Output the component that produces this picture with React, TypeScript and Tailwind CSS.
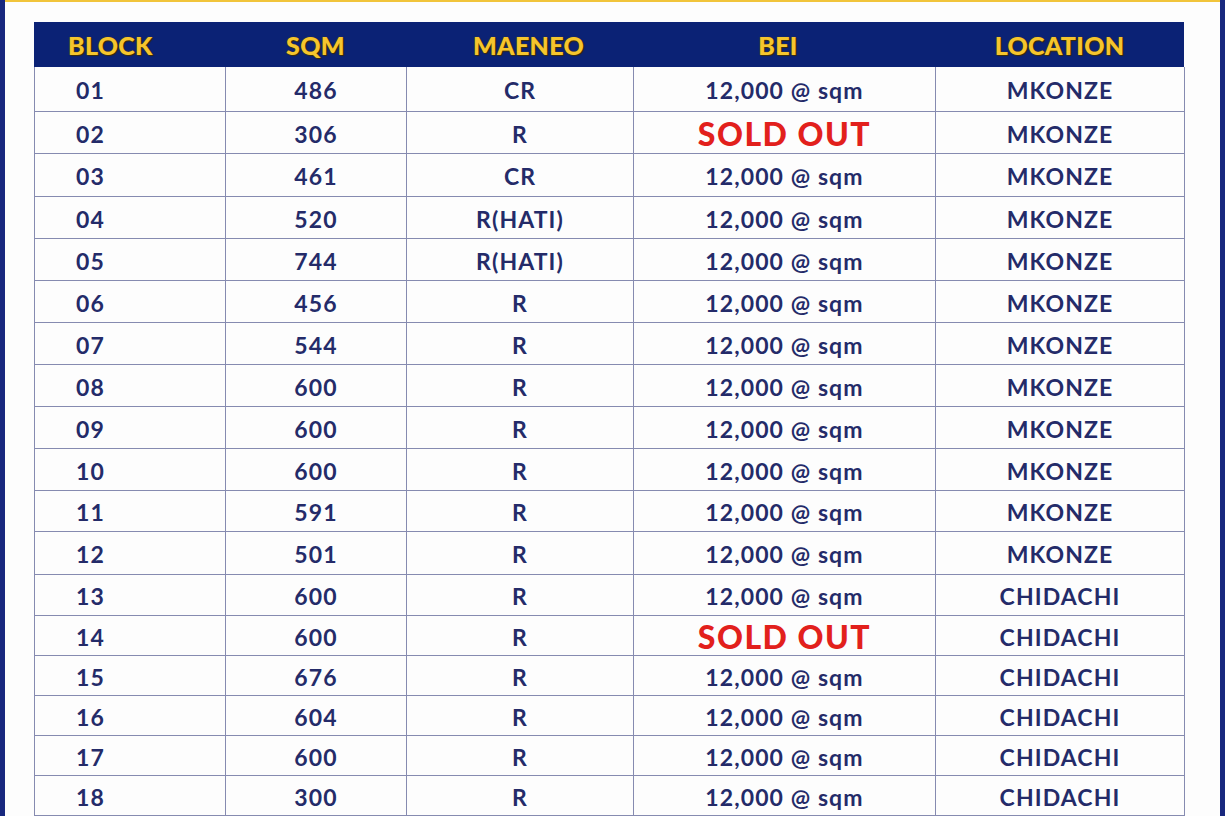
import React from 'react';

type Row = { block: string; sqm: string; eneo: string; sold?: boolean; loc: string; h: string };

const rows: Row[] = [
    { block: '01', sqm: '486', eneo: 'CR', loc: 'MKONZE', h: 'h-[45px]' },
    { block: '02', sqm: '306', eneo: 'R', sold: true, loc: 'MKONZE', h: 'h-[42px]' },
    { block: '03', sqm: '461', eneo: 'CR', loc: 'MKONZE', h: 'h-[43px]' },
    { block: '04', sqm: '520', eneo: 'R(HATI)', loc: 'MKONZE', h: 'h-[42px]' },
    { block: '05', sqm: '744', eneo: 'R(HATI)', loc: 'MKONZE', h: 'h-[42px]' },
    { block: '06', sqm: '456', eneo: 'R', loc: 'MKONZE', h: 'h-[42px]' },
    { block: '07', sqm: '544', eneo: 'R', loc: 'MKONZE', h: 'h-[42px]' },
    { block: '08', sqm: '600', eneo: 'R', loc: 'MKONZE', h: 'h-[42px]' },
    { block: '09', sqm: '600', eneo: 'R', loc: 'MKONZE', h: 'h-[42px]' },
    { block: '10', sqm: '600', eneo: 'R', loc: 'MKONZE', h: 'h-[42px]' },
    { block: '11', sqm: '591', eneo: 'R', loc: 'MKONZE', h: 'h-[41px]' },
    { block: '12', sqm: '501', eneo: 'R', loc: 'MKONZE', h: 'h-[43px]' },
    { block: '13', sqm: '600', eneo: 'R', loc: 'CHIDACHI', h: 'h-[41px]' },
    { block: '14', sqm: '600', eneo: 'R', sold: true, loc: 'CHIDACHI', h: 'h-[40px]' },
    { block: '15', sqm: '676', eneo: 'R', loc: 'CHIDACHI', h: 'h-[40px]' },
    { block: '16', sqm: '604', eneo: 'R', loc: 'CHIDACHI', h: 'h-[40px]' },
    { block: '17', sqm: '600', eneo: 'R', loc: 'CHIDACHI', h: 'h-[40px]' },
    { block: '18', sqm: '300', eneo: 'R', loc: 'CHIDACHI', h: 'h-[40px]' },
];

const headerText = "text-[#f5c52e] text-[25px] leading-none font-black tracking-[0.3px] [text-shadow:0_0_1px_#7a5a00,1px_1px_1px_#3a2a00]";
const cell = "flex items-center pt-[3px] border-r border-b border-[#868bb0] text-[#242b69] text-[23px] leading-none font-bold tracking-[1.1px]";

export default function App() {
    return (
        <div className="w-[1225px] h-[816px] overflow-hidden bg-[#fdfdfd] flex" style={{ fontFamily: 'Lato, "Noto Sans", sans-serif' }}>
            <div className="w-[5px] bg-[#18287e] shrink-0" />
            <div className="flex-1 flex flex-col">
                <div className="h-[3px] bg-[#f1c43a]" />
                <div className="pl-[29px] pt-[20px]">
                    <div className="w-[1150px]">
                        {/* header */}
                        <div className="grid grid-cols-[191px_181px_227px_302px_249px] h-[45px] bg-[#0b2275] items-center pt-[2px]">
                            <div className={`${headerText} pl-[34px]`}>BLOCK</div>
                            <div className={`${headerText} text-center`}>SQM</div>
                            <div className={`${headerText} text-center pl-[18px]`}>MAENEO</div>
                            <div className={`${headerText} text-center pr-[12px]`}>BEI</div>
                            <div className={`${headerText} text-center`}>LOCATION</div>
                        </div>
                        {rows.map(r => (
                            <div key={r.block} className={`grid grid-cols-[191px_181px_227px_302px_249px] border-l border-[#868bb0] ${r.h}`}>
                                <div className={`${cell} pl-[41px]`}>{r.block}</div>
                                <div className={`${cell} justify-center`}>{r.sqm}</div>
                                <div className={`${cell} justify-center`}>{r.eneo}</div>
                                <div className={`${cell} justify-center`}>
                                    {r.sold ? (
                                        <span className="text-[#e2201c] text-[32px] leading-none font-black tracking-[1.5px]">SOLD OUT</span>
                                    ) : (
                                        '12,000 @ sqm'
                                    )}
                                </div>
                                <div className={`${cell} justify-center`}>{r.loc}</div>
                            </div>
                        ))}
                    </div>
                </div>
            </div>
            <div className="w-[5px] bg-[#18287e] shrink-0" />
        </div>
    );
}
